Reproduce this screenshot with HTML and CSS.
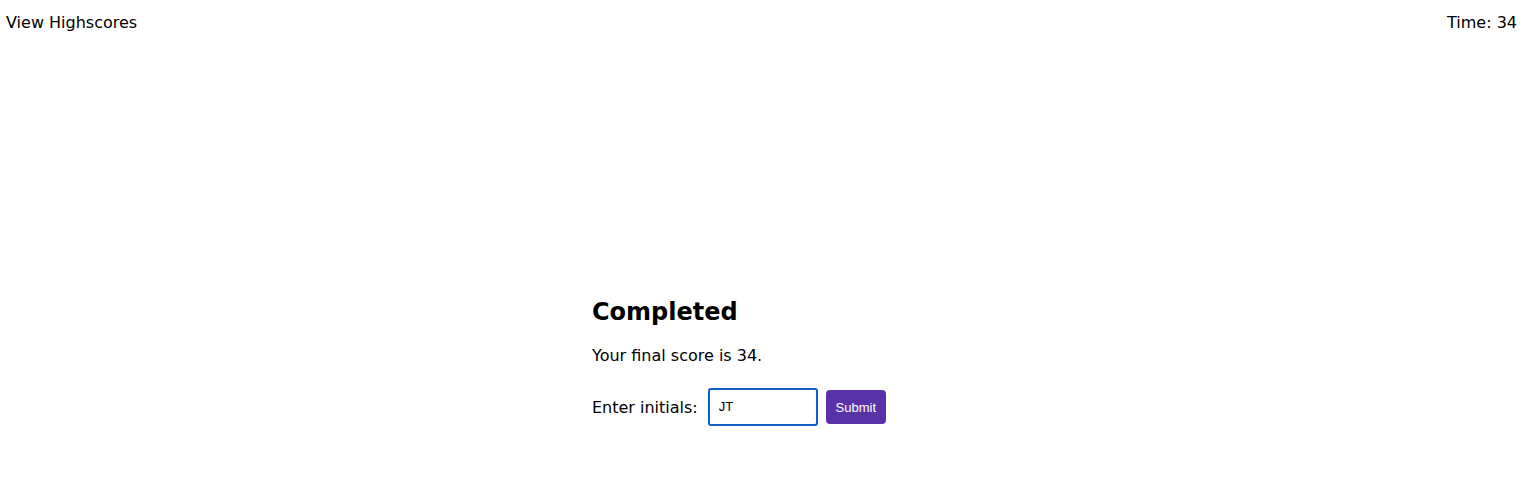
FILE: index.html
```html
<!DOCTYPE html>
<html>
<head>
<meta charset="utf-8">
<title>Quiz</title>
<link rel="stylesheet" href="styles.css">
</head>
<body>
<header class="topbar">
  <a class="highscores">View Highscores</a>
  <div class="timer">Time: 34</div>
</header>
<main class="quiz">
  <section class="done">
    <h2 class="title">Completed</h2>
    <p class="score">Your final score is 34.</p>
    <form class="initials">
      <label class="label">Enter initials:</label>
      <div class="field">JT</div>
      <button class="submit" type="button">Submit</button>
    </form>
  </section>
</main>
</body>
</html>
```

FILE: styles.css
```css
html, body {
  margin: 0;
  padding: 0;
  background: #fff;
}
body {
  font-family: "DejaVu Sans", Verdana, sans-serif;
  font-size: 16px;
  color: #000;
}
.topbar {
  display: flex;
  justify-content: space-between;
  align-items: center;
  padding: 13px 22px 0 6px;
  line-height: 20px;
}
.highscores {
  color: #000;
}
.quiz {
  display: flex;
  justify-content: center;
  padding-top: 264px;
}
.done {
  width: 355px;
}
.title {
  margin: 0;
  font-size: 24px;
  font-weight: bold;
  line-height: 30px;
}
.score {
  margin: 19px 0 0;
  line-height: 20px;
}
.initials {
  display: flex;
  align-items: center;
  margin-top: 22px;
}
.label {
  margin-right: 10px;
}
.field {
  box-sizing: border-box;
  width: 110px;
  height: 38px;
  border: 2px solid #0f5fc8;
  border-radius: 3px;
  padding: 0 9px;
  font-family: "Liberation Sans", Arial, sans-serif;
  font-size: 13px;
  line-height: 34px;
}
.submit {
  box-sizing: border-box;
  margin-left: 8px;
  width: 60px;
  height: 34px;
  border: none;
  border-radius: 4px;
  background: #5a32a8;
  color: #fff;
  font-family: "Liberation Sans", Arial, sans-serif;
  font-size: 13px;
  padding: 0;
}
```
